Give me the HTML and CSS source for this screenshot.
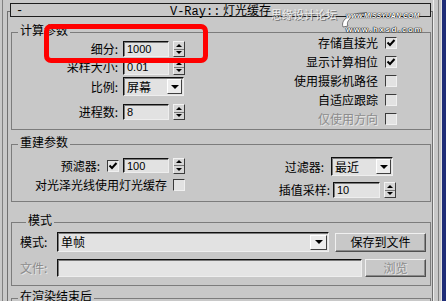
FILE: index.html
```html
<!DOCTYPE html>
<html lang="zh-CN">
<head>
<meta charset="utf-8">
<title>V-Ray:: 灯光缓存</title>
<link rel="stylesheet" href="styles.css">
</head>
<body>
<div class="screen">
  <div class="edge-left"></div>
  <div class="rollout">
    <div class="titlebar">
      <span class="collapse">-</span>
      <span class="title"><span class="mono">V-Ray::</span> 灯光缓存</span>
      <span></span>
    </div>

    <fieldset class="group g-calc">
      <legend>计算参数</legend>
      <div class="cols">
        <div class="col-left">
          <div class="row r1"><span class="lbl">细分:</span><span class="field num w46">1000</span><span class="spin"><i class="up"></i><i class="dn"></i></span></div>
          <div class="row r2"><span class="lbl">采样大小:</span><span class="field num w46">0.01</span><span class="spin"><i class="up"></i><i class="dn"></i></span></div>
          <div class="row r3"><span class="lbl">比例:</span><span class="combo c-scale"><span class="combo-text">屏幕</span><span class="combo-btn"></span></span></div>
          <div class="row r4"><span class="lbl">进程数:</span><span class="field num w46">8</span><span class="spin"><i class="up"></i><i class="dn"></i></span></div>
        </div>
        <div class="col-right">
          <div class="chk-row"><span>存储直接光</span><span class="chk on"><svg viewBox="0 0 10 10" width="10" height="10"><path d="M1.5 4.5 L4 7 L8.5 2" fill="none" stroke="#000" stroke-width="2"/></svg></span></div>
          <div class="chk-row"><span>显示计算相位</span><span class="chk on"><svg viewBox="0 0 10 10" width="10" height="10"><path d="M1.5 4.5 L4 7 L8.5 2" fill="none" stroke="#000" stroke-width="2"/></svg></span></div>
          <div class="chk-row"><span>使用摄影机路径</span><span class="chk"></span></div>
          <div class="chk-row"><span>自适应跟踪</span><span class="chk"></span></div>
          <div class="chk-row disabled"><span>仅使用方向</span><span class="chk"></span></div>
        </div>
      </div>
    </fieldset>

    <fieldset class="group g-rebuild">
      <legend>重建参数</legend>
      <div class="cols">
        <div class="col-left">
          <div class="row p1"><span class="lbl">预滤器:</span><span class="chk on prechk"><svg viewBox="0 0 10 10" width="10" height="10"><path d="M1.5 4.5 L4 7 L8.5 2" fill="none" stroke="#000" stroke-width="2"/></svg></span><span class="field num w46">100</span><span class="spin"><i class="up"></i><i class="dn"></i></span></div>
          <div class="row p2"><span class="lbl">对光泽光线使用灯光缓存</span><span class="chk"></span></div>
        </div>
        <div class="col-right2">
          <div class="row f1"><span class="lbl">过滤器:</span><span class="combo c-filter"><span class="combo-text">最近</span><span class="combo-btn"></span></span></div>
          <div class="row f2"><span class="lbl">插值采样:</span><span class="field num w47">10</span><span class="spin"><i class="up"></i><i class="dn"></i></span></div>
        </div>
      </div>
    </fieldset>

    <fieldset class="group g-mode">
      <legend>模式</legend>
      <div class="mode-row m1">
        <span class="mlbl">模式:</span>
        <span class="combo c-mode"><span class="combo-text">单帧</span><span class="combo-btn big"></span></span>
        <span class="btn b-save">保存到文件</span>
      </div>
      <div class="mode-row m2">
        <span class="mlbl disabled-text">文件:</span>
        <span class="field f-file"></span>
        <span class="btn b-browse disabled-text">浏览</span>
      </div>
    </fieldset>

    <fieldset class="group g-after">
      <legend>在渲染结束后</legend>
    </fieldset>
  </div>
  <div class="edge-right"><div class="er1"></div><div class="er2"></div><div class="blue"></div></div>

  <div class="watermark">
    <span class="wm-cn">思缘设计论坛</span>
    <svg class="wm-swoosh" width="30" height="22" viewBox="0 0 30 22"><path d="M3 18 C0 10 12 3 27 4 C14 5 5 11 8 17 Z" fill="#ffffff" stroke="#555" stroke-width="0.8"/></svg>
    <span class="wm-url1">www.MISSYUAN.COM</span>
    <span class="wm-url2">www.hxsd.com</span>
  </div>
  <div class="annot"></div>
</div>
</body>
</html>
```

FILE: styles.css
```css
* { box-sizing: border-box; }
html, body { margin: 0; padding: 0; }
body {
  width: 446px;
  height: 301px;
  overflow: hidden;
  background: #c8c8c8;
  font-family: "Noto Sans CJK SC", "Liberation Sans", sans-serif;
  font-size: 12px;
  color: #000;
}
.screen { position: relative; display: flex; height: 301px; overflow: hidden; }

.edge-left {
  flex: none;
  width: 5px;
  margin-left: 2px;
  border-left: 1px solid #808080;
}
.rollout {
  flex: none;
  width: 426px;
  margin-top: 11px;
  border-left: 1px solid #707070;
  border-top: 1px solid #707070;
  border-right: 1px solid #707070;
  padding: 0 1px 0 2px;
}
.edge-right { flex: none; width: 13px; display: flex; }
.er1 { width: 5px; border-left: 1px solid #ececec; }
.er2 { width: 4px; border-left: 1px solid #808080; border-right: 1px solid #e4e4e4; }
.blue { width: 4px; background: #1f2d78; }

/* title */
.titlebar {
  height: 14px;
  margin-top: -9px;
  border: 1px solid #1c1c1c;
  background: #c8c8c8;
  display: grid;
  grid-template-columns: 1fr auto 1fr;
  align-items: center;
  line-height: 12px;
}
.collapse { padding-left: 5px; font-family: "Liberation Mono", monospace; font-size: 12px; }
.title { font-size: 12px; white-space: nowrap; }
.mono { font-family: "Liberation Mono", monospace; font-size: 12px; }

/* groups */
.group {
  margin: 7px 0 0 1px;
  padding: 0 0 4px 0;
  border: 1px solid #7c7c7c;
  min-width: 0;
}
.group legend {
  margin-left: 6px;
  padding: 0 2px 4px;
  line-height: 12px;
  font-size: 12px;
}
.g-rebuild { margin-top: 6px; padding-bottom: 3px; }
.g-mode { margin-top: 12px; padding: 0 4px 8px 8px; }
.g-after { margin-top: 4px; height: 40px; }

.cols { display: flex; justify-content: space-between; }
.col-left {
  width: 173px;
  display: flex;
  flex-direction: column;
  align-items: flex-end;
}
.col-right {
  margin-top: -3px;
  margin-right: 33px;
  display: flex;
  flex-direction: column;
  gap: 7px;
}
.col-right2 {
  margin-top: 5px;
  margin-right: 34px;
  display: flex;
  flex-direction: column;
  align-items: flex-end;
  gap: 6px;
}

.row { display: flex; align-items: center; white-space: nowrap; }
.lbl { line-height: 12px; }
.g-calc .r1 { margin-top: 1px; height: 16px; }
.g-calc .r2 { margin-top: 2px; height: 16px; }
.g-calc .r3 { margin-top: 2px; height: 19px; margin-right: 1px; }
.g-calc .r4 { margin-top: 8px; height: 16px; }
.g-calc .row .lbl { margin-right: 5px; }
.g-calc .row .field { margin-right: 4px; }

.g-rebuild .col-left { padding-top: 6px; }
.p1 { height: 15px; }
.p1 .lbl { margin-right: 7px; }
.p1 .prechk { margin-right: 4px; }
.p1 .field { margin-right: 4px; }
.p2 { margin-top: 5px; height: 13px; }
.p2 .lbl { margin-right: 6px; }
.f1 { height: 19px; margin-right: 3px; }
.f1 .lbl { margin-right: 7px; }
.f2 { height: 16px; }
.f2 .lbl { margin-right: 3px; }
.f2 .field { margin-right: 4px; }

/* fields */
.field {
  display: flex;
  align-items: center;
  height: 100%;
  background: #e2e2e2;
  border: 1px solid;
  border-color: #101010 #eeeeee #eeeeee #101010;
  box-shadow: inset 1px 1px 0 #7a7a7a;
  padding-left: 3px;
}
.num { font-family: "Liberation Sans", sans-serif; font-size: 11px; }
.w46 { width: 46px; }
.w47 { width: 47px; }

.spin {
  width: 12px;
  height: 16px;
  display: flex;
  flex-direction: column;
  border: 1px solid;
  border-color: #f2f2f2 #3c3c3c #3c3c3c #f2f2f2;
  background: #d6d6d6;
}
.spin i { flex: 1; display: flex; align-items: center; justify-content: center; }
.spin i.up { border-bottom: 1px solid #7a7a7a; }
.spin i.up::before {
  content: "";
  border-left: 3px solid transparent;
  border-right: 3px solid transparent;
  border-bottom: 3px solid #000;
}
.spin i.dn::before {
  content: "";
  border-left: 3px solid transparent;
  border-right: 3px solid transparent;
  border-top: 3px solid #000;
}

.combo {
  display: flex;
  align-items: center;
  height: 100%;
  background: #e2e2e2;
  border: 1px solid;
  border-color: #101010 #eeeeee #eeeeee #101010;
  box-shadow: inset 1px 1px 0 #7a7a7a;
  padding: 0 1px 0 3px;
}
.combo-text { flex: 1; line-height: 12px; }
.combo-btn {
  width: 15px;
  height: 15px;
  display: flex;
  align-items: center;
  justify-content: center;
  background: #ececec;
  border: 1px solid;
  border-color: #ffffff #404040 #404040 #ffffff;
}
.combo-btn::before {
  content: "";
  border-left: 4px solid transparent;
  border-right: 4px solid transparent;
  border-top: 4px solid #000;
}
.c-scale { width: 61px; }
.c-filter { width: 62px; }
.c-mode { width: 272px; height: 20px; }
.combo-btn.big { width: 17px; height: 15px; }

/* checkboxes */
.chk {
  flex: none;
  width: 12px;
  height: 12px;
  display: flex;
  align-items: center;
  justify-content: center;
  background: #e2e2e2;
  border: 1px solid;
  border-color: #3a3a3a #f0f0f0 #f0f0f0 #3a3a3a;
}
.chk-row {
  height: 12px;
  display: flex;
  align-items: center;
  justify-content: flex-end;
  gap: 7px;
  line-height: 12px;
  white-space: nowrap;
}
.disabled > span:first-child, .disabled-text {
  color: #8c8c8c;
  text-shadow: 1px 1px 0 #e6e6e6;
}

/* mode group */
.mode-row { display: flex; align-items: center; }
.m1 { margin-top: 2px; height: 20px; }
.m2 { margin-top: 7px; height: 18px; }
.mlbl { width: 37px; line-height: 12px; }
.b-save { margin-left: 6px; width: 91px; height: 19px; }
.f-file { width: 305px; height: 18px; background: #e4e4e4; }
.b-browse { margin-left: 3px; width: 61px; height: 18px; }
.btn {
  display: flex;
  align-items: center;
  justify-content: center;
  background: #c8c8c8;
  border: 1px solid;
  border-color: #f0f0f0 #505050 #505050 #f0f0f0;
  box-shadow: inset -1px -1px 0 #8a8a8a;
  line-height: 12px;
}

/* watermark overlay */
.watermark { position: absolute; left: 0; top: 0; width: 446px; height: 40px; pointer-events: none; }
.watermark span, .watermark svg { position: absolute; white-space: nowrap; }
.wm-cn {
  left: 271px; top: 8px;
  font-size: 11px; line-height: 12px;
  color: #eeeeee;
  text-shadow: 1px 1px 0 #707070;
}
.wm-swoosh { left: 340px; top: 9px; }
.wm-url1 {
  left: 346px; top: 12px;
  font-family: "Liberation Sans", sans-serif;
  font-size: 7px; line-height: 8px;
  font-weight: bold; font-style: italic;
  color: #ffffff;
  text-shadow: 0 0 1px #000, 0 0 1px #000;
}
.wm-url2 {
  left: 346px; top: 26px;
  font-family: "Liberation Sans", sans-serif;
  font-size: 8px; line-height: 8px;
  font-weight: bold;
  letter-spacing: 1.6px;
  color: #ffffff;
  text-shadow: 0 0 1px #000, 0 0 1px #000, 0 0 1px #000;
}

/* red annotation */
.annot {
  position: absolute;
  left: 44px; top: 24px;
  width: 164px; height: 39px;
  border: 5px solid #ff0000;
  border-radius: 7px;
  filter: blur(0.7px);
}
```
